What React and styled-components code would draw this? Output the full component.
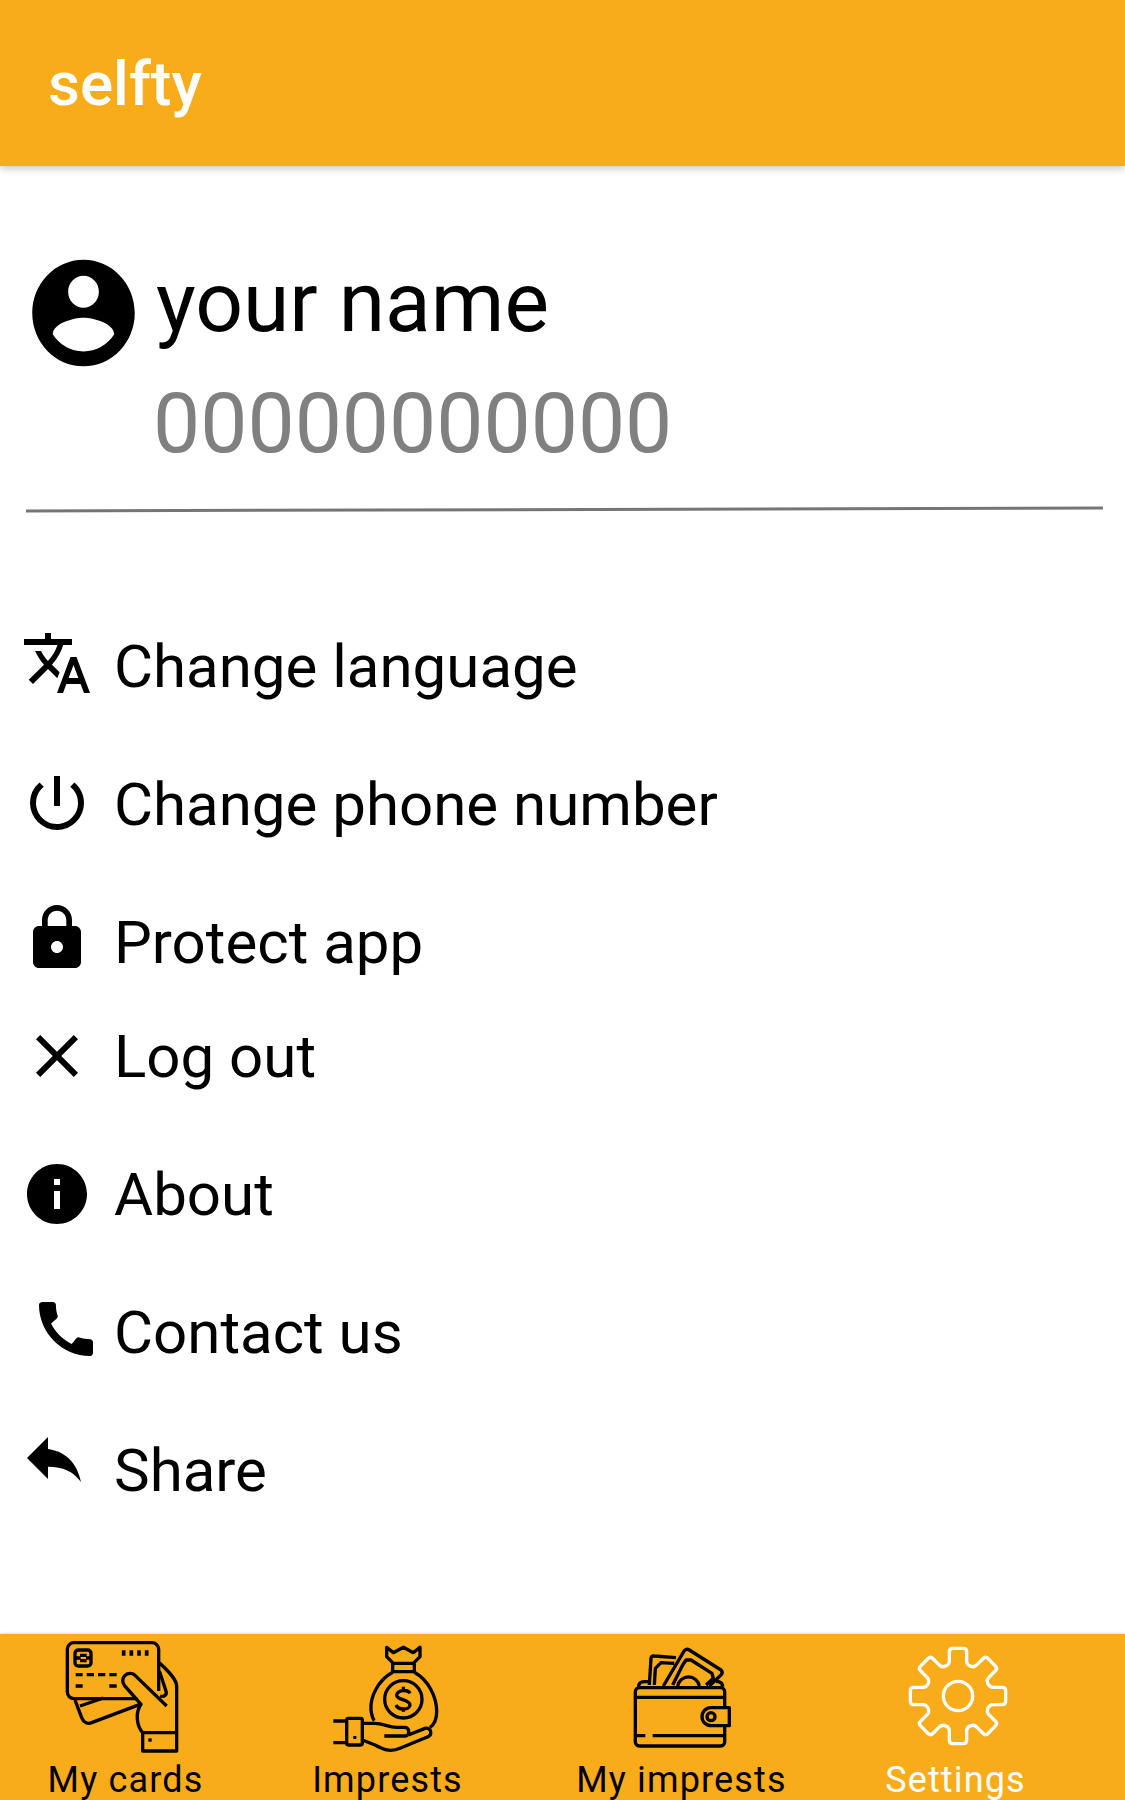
import React from 'react';
import styled, { createGlobalStyle } from 'styled-components';
import { MdTranslate, MdPowerSettingsNew, MdLock, MdClose, MdInfo, MdCall, MdReply } from 'react-icons/md';

const ORANGE = '#f9ac19';

const Global = createGlobalStyle`
  html, body { margin: 0; padding: 0; background: #fff; }
  body { font-family: Roboto, "Noto Sans", sans-serif; }
`;

const Page = styled.div`
  width: 1125px;
  height: 1800px;
  display: flex;
  flex-direction: column;
  overflow: hidden;
  background: #fff;
`;

const Header = styled.header`
  flex: 0 0 166px;
  display: flex;
  align-items: center;
  padding-left: 48px;
  background: ${ORANGE};
  box-shadow: 0 2px 8px rgba(0, 0, 0, 0.25);
  z-index: 1;
`;

const Title = styled.h1`
  margin: 0;
  font-size: 62px;
  font-weight: 500;
  color: #fff;
`;

const Main = styled.main`
  flex: 1;
  min-height: 0;
`;

const Profile = styled.section`
  display: grid;
  grid-template-columns: 123px 1fr;
  column-gap: 11px;
  padding: 83px 0 0 22px;
`;

const AvatarSvg = styled.svg`
  display: block;
  width: 123px;
  height: 128px;
  fill: #000;
`;

const Avatar = () => (
  <AvatarSvg viewBox="0 0 24 24" preserveAspectRatio="none">
    <path d="M12 2C6.48 2 2 6.48 2 12s4.48 10 10 10 10-4.48 10-10S17.52 2 12 2zm0 3c1.66 0 3 1.34 3 3s-1.34 3-3 3-3-1.34-3-3 1.34-3 3-3zm0 14.2c-2.5 0-4.71-1.28-6-3.22.03-1.99 4-3.08 6-3.08 1.99 0 5.97 1.09 6 3.08-1.29 1.94-3.5 3.22-6 3.22z" />
  </AvatarSvg>
);

const Name = styled.div`
  font-size: 84px;
  line-height: 108px;
  color: #000;
`;

const PhoneNumber = styled.div`
  grid-column: 2;
  font-size: 84px;
  line-height: 98px;
  margin: -2px 0 0 -3px;
  color: #808080;
`;

const Divider = styled.hr`
  height: 3px;
  margin: 35px 22px 0 26px;
  border: 0;
  background: #757575;
  transform: rotate(-0.16deg);
`;

const Menu = styled.nav`
  padding: 74px 0 0 21px;
`;

const Row = styled.div`
  display: flex;
  align-items: center;
  gap: 21px;
  height: 114px;
  margin-top: ${p => (p.$tight ? 0 : 24)}px;
  font-size: 60px;
  color: #000;
`;

const IconSlot = styled.span`
  flex: 0 0 72px;
  display: flex;
  font-size: 72px;
  transform: translate(${p => p.$dx || 0}px, ${p => p.$dy || 0}px);
`;

const BottomBar = styled.footer`
  flex: 0 0 166px;
  display: grid;
  grid-template-columns: 250px 274px 314px 234px;
  background: ${ORANGE};
  box-shadow: 0 0 3px rgba(0, 0, 0, 0.25);
  overflow: hidden;
`;

const Tab = styled.div`
  display: flex;
  flex-direction: column;
  align-items: center;
  padding-top: 2px;
  color: ${p => (p.$active ? '#fff' : '#000')};
`;

const TabLabel = styled.span`
  font-size: 36px;
  font-weight: 400;
  line-height: 42px;
  letter-spacing: 1.15px;
  white-space: nowrap;
  margin-top: -7px;
  padding-left: 1px;
`;

const Glyph = styled.svg`
  display: block;
  height: 130px;
  fill: none;
  stroke: currentColor;
  stroke-width: 10;
  stroke-linejoin: round;
`;

const CardsIcon = () => (
  <Glyph width="130" viewBox="0 0 390 390">
    <path d="M232 188H42a20 20 0 0 1-20-20V40a20 20 0 0 1 20-20H276a20 20 0 0 1 20 20V165" />
    <rect x="45" y="42" width="48" height="48" rx="10" />
    <path d="M60 58H80M60 74H80M46 66H62M78 66H92" />
    <path d="M191 43V59M214 43V59M237 43V59M260 43V59" strokeWidth="11" />
    <path d="M47 116H68M80 116H102M114 116H136M148 116H170M47 150H68M148 150H170" />
    <path d="M320 210L225 118a22 22 0 0 0-32 30L243 205C225 230 230 270 248 290V345H350V150C350 130 325 105 298 80" />
    <path d="M248 290H350" />
    <rect x="265" y="307" width="10" height="10" fill="currentColor" strokeWidth="0" />
    <path d="M298 105L318 165C322 176 312 184 300 180" />
    <path d="M45 192L65 245C70 258 82 265 95 260L240 205M60 210L130 186" />
  </Glyph>
);

const ImprestsIcon = () => (
  <Glyph width="125" viewBox="0 -12 375 390">
    <path d="M185 22L205 38L235 22L265 38L285 22V50L265 70H205L185 50Z" />
    <path d="M203 70V95H268V70" />
    <path d="M203 97C160 120 135 170 138 210C140 225 142 235 148 242M268 97C310 120 335 170 335 215C335 240 325 255 315 262" />
    <circle cx="235" cy="178" r="56" />
    <path d="M255 160C250 148 218 148 215 165C213 180 255 178 255 195C255 210 220 212 213 195M235 140V150M235 207V215" />
    <rect x="65" y="235" width="47" height="80" rx="5" />
    <rect x="85" y="288" width="9" height="9" fill="currentColor" strokeWidth="0" />
    <path d="M25 243H65M25 308H65" />
    <path d="M112 250H150C175 250 190 262 215 262H240C255 262 255 288 240 288H178" />
    <path d="M250 285L300 265C318 260 325 285 305 292L225 325C195 338 175 328 150 315L112 300" />
  </Glyph>
);

const WalletIcon = () => (
  <Glyph width="110" viewBox="0 -12 330 390">
    <path d="M296 200V155a12 12 0 0 0-12-12H40a12 12 0 0 0-12 12V306a12 12 0 0 0 12 12H284a12 12 0 0 0 12-12V260" />
    <path d="M28 172H296M28 287H58M80 287H296" />
    <path d="M310 203H255a27 27 0 0 0 0 54H310Z" />
    <circle cx="255" cy="230" r="12" />
    <path d="M70 135L75 55Q76 47 85 48L150 53M85 135L88 85L105 68L145 70" />
    <path d="M112 138L175 32Q182 25 190 30L285 90Q292 97 285 105L250 138" />
    <path d="M140 135L170 75L180 60L195 60L258 100L262 115L240 135M155 138A33 33 0 0 1 220 138" />
    <path d="M38 140Q38 125 55 125H70M270 125H278Q290 128 290 140" />
  </Glyph>
);

const TOOTH = 'M-26 -108V-133Q-26 -143 -16 -143H16Q26 -143 26 -133V-108A18 18 0 0 0 58 -95';
const GearIcon = () => (
  <Glyph width="120" viewBox="-15 -12 360 390">
    <g transform="translate(174 168)">
      {[0, 45, 90, 135, 180, 225, 270, 315].map(a => (
        <path key={a} d={TOOTH} transform={`rotate(${a})`} />
      ))}
      <circle r="44" />
    </g>
  </Glyph>
);

const items = [
  { label: 'Change language', Icon: MdTranslate, dy: -3 },
  { label: 'Change phone number', Icon: MdPowerSettingsNew, dy: -1 },
  { label: 'Protect app', Icon: MdLock, dy: -4 },
  { label: 'Log out', Icon: MdClose, tight: true },
  { label: 'About', Icon: MdInfo },
  { label: 'Contact us', Icon: MdCall, dx: 9, dy: -3 },
  { label: 'Share', Icon: MdReply, dx: -3, dy: -12 },
];

const tabs = [
  { label: 'My cards', Icon: CardsIcon },
  { label: 'Imprests', Icon: ImprestsIcon },
  { label: 'My imprests', Icon: WalletIcon },
  { label: 'Settings', Icon: GearIcon, active: true },
];

export default function App() {
  return (
    <Page>
      <Global />
      <Header>
        <Title>selfty</Title>
      </Header>
      <Main>
        <Profile>
          <Avatar />
          <Name>your name</Name>
          <PhoneNumber>00000000000</PhoneNumber>
        </Profile>
        <Divider />
        <Menu>
          {items.map(({ label, Icon, dx, dy, tight }) => (
            <Row key={label} $tight={tight}>
              <IconSlot $dx={dx} $dy={dy}><Icon /></IconSlot>
              <span>{label}</span>
            </Row>
          ))}
        </Menu>
      </Main>
      <BottomBar>
        {tabs.map(({ label, Icon, active }) => (
          <Tab key={label} $active={active}>
            <Icon />
            <TabLabel>{label}</TabLabel>
          </Tab>
        ))}
      </BottomBar>
    </Page>
  );
}
